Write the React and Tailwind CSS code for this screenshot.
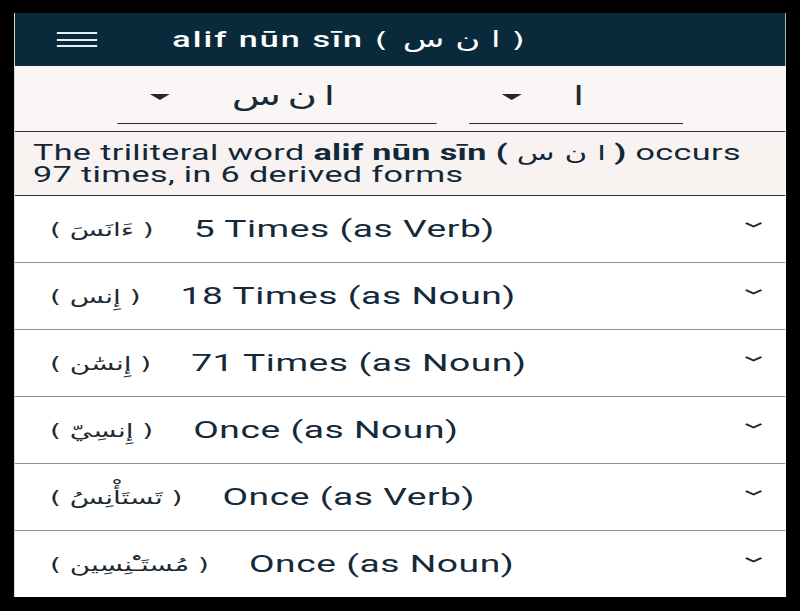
import React from "react";

const ROWS = [
  { ar: "( ءَانَسَ )", en: "5 Times (as Verb)" },
  { ar: "( إِنس )", en: "18 Times (as Noun)" },
  { ar: "( إِنسَٰن )", en: "71 Times (as Noun)" },
  { ar: "( إِنسِيّ )", en: "Once (as Noun)" },
  { ar: "( تَستَأْنِسُ )", en: "Once (as Verb)" },
  { ar: "( مُستَـْٔنِسِين )", en: "Once (as Noun)" },
];

function Caret() {
  return (
    <svg width="13" height="6" viewBox="0 0 13 6" className="shrink-0">
      <path d="M0 0 L13 0 L6.5 6 Z" fill="#1c2a33" />
    </svg>
  );
}

function Chevron() {
  return (
    <svg width="11" height="6" viewBox="0 0 11 6" className="shrink-0 -mt-[7px]">
      <path d="M0.5 1 L5.5 4.5 L10.5 1" fill="none" stroke="#1c2a33" strokeWidth="1.6" />
    </svg>
  );
}

export default function App() {
  return (
    <div className="w-[800px] h-[611px] bg-black pt-[13px] pl-[14px] overflow-hidden">
      <div className="w-[772px] h-[584px] border-l border-[#d9d9d9] bg-white overflow-hidden">
        {/* la captura está estirada en horizontal, así que escalamos todo el contenido */}
        <div className="w-[497.4px] origin-top-left scale-x-[1.55] font-['Roboto',sans-serif] text-[#14293a]">
          {/* barra superior */}
          <div className="h-[53px] bg-[#082a3b] flex items-center">
            <div className="ml-[26.5px] w-[26px] flex flex-col gap-[4.5px]">
              <div className="h-[2px] bg-[#e6eef2]" />
              <div className="h-[2px] bg-[#e6eef2]" />
              <div className="h-[2px] bg-[#e6eef2]" />
            </div>
            <div className="ml-[49px] text-white text-[22px] font-medium tracking-[0.06em] whitespace-nowrap">
              alif nūn sīn <span className="font-['DejaVu_Sans',sans-serif] font-normal">( ا ن س )</span>
            </div>
          </div>

          {/* selectores */}
          <div className="h-[66px] bg-[#faf6f5] border-b border-[#2b3a44] flex pl-[65.8px]">
            <div className="w-[206.5px] h-[58px] border-b-[1.5px] border-[#1f2d36] flex items-center pt-[4px]">
              <div className="ml-[21px]"><Caret /></div>
              <span className="ml-[40px] text-[26px] text-[#1c2a33] font-['DejaVu_Sans',sans-serif] whitespace-nowrap [word-spacing:-4px]" dir="rtl">ا ن س</span>
            </div>
            <div className="ml-[21.2px] w-[137.4px] h-[58px] border-b-[1.5px] border-[#1f2d36] flex items-center pt-[4px]">
              <div className="ml-[20.5px]"><Caret /></div>
              <span className="ml-[33px] text-[26px] text-[#1c2a33] font-['DejaVu_Sans',sans-serif]" dir="rtl">ا</span>
            </div>
          </div>

          {/* descripción */}
          <div className="h-[64px] bg-[#f8f3f1] border-b border-[#2b3a44] flex items-center px-[11.6px]">
            <p className="text-[22px] leading-[22px] tracking-[0.25px] text-[#10283a]">
              The triliteral word <b>alif nūn sīn ( <span className="font-['DejaVu_Sans',sans-serif] font-normal text-[20px] tracking-normal">ا ن س</span> )</b> occurs 97 times, in 6 derived forms
            </p>
          </div>

          {/* formas derivadas */}
          {ROWS.map((r, i) => (
            <div
              key={i}
              className="h-[67px] border-b border-[#8c9094] flex items-center pl-[22.6px] pr-[15.5px] bg-white"
            >
              <span dir="rtl" className="text-[18px] text-[#1c2a33] font-['DejaVu_Sans',sans-serif] whitespace-nowrap">
                {r.ar}
              </span>
              <span className="ml-[25.8px] text-[24px] tracking-[0.35px] text-[#14293a] whitespace-nowrap">{r.en}</span>
              <div className="ml-auto"><Chevron /></div>
            </div>
          ))}
        </div>
      </div>
    </div>
  );
}
